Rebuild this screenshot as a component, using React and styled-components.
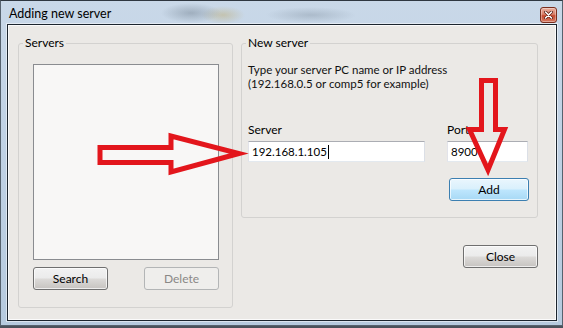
import React from 'react';
import styled, { createGlobalStyle } from 'styled-components';

const Global = createGlobalStyle`
  html, body { margin: 0; padding: 0; background: #4a525b; }
  body {
    width: 563px; height: 328px; overflow: hidden;
    font-family: Lato, "Noto Sans", sans-serif;
    font-size: 11.5px; color: #000;
  }
`;

const Window = styled.div`
  position: relative;
  width: 563px;
  height: 326px;
  box-sizing: border-box;
  border: 1px solid #56626e;
  border-top-color: #2f3740;
  background:
    radial-gradient(ellipse 30px 10px at 190px 12px, rgba(110,125,140,.45), transparent),
    radial-gradient(ellipse 22px 9px at 222px 14px, rgba(190,170,110,.45), transparent),
    radial-gradient(ellipse 45px 8px at 310px 14px, rgba(120,135,150,.35), transparent),
    linear-gradient(180deg, #c9d8e8 0%, #c0d2e5 40%, #b6cade 100%);
  display: flex;
  flex-direction: column;
`;

const TitleBar = styled.div`
  height: 23px;
  flex: none;
  display: flex;
  align-items: flex-start;
  justify-content: space-between;
  padding: 0 5px 0 8px;
`;

const Title = styled.div`
  font-size: 12.5px;
  line-height: 16px;
  margin-top: 5px;
  color: #000;
`;

const TitleClose = styled.div`
  width: 17px;
  height: 16px;
  margin-top: 6px;
  box-sizing: border-box;
  border: 1px solid #7a2e1e;
  border-radius: 3px;
  background: linear-gradient(180deg, #eab0a0 0%, #d9806a 45%, #c54a30 55%, #d67a62 100%);
  box-shadow: inset 0 0 0 1px rgba(255,255,255,.35);
  display: flex;
  align-items: center;
  justify-content: center;
`;

const Client = styled.div`
  flex: 1;
  margin: 0 5px 4px 6px;
  background: #ebe9e6;
  border: 1px solid #1c252e;
  box-shadow: inset 1px 1px 0 #fbfbfb, inset -1px -1px 0 #fbfbfb, 0 0 0 1px rgba(255,255,255,.5);
  padding: 10px 0 0 10px;
  display: flex;
  align-items: flex-start;
  gap: 8px;
`;

const Group = styled.fieldset`
  margin: 0;
  padding: 0;
  min-width: 0;
  width: ${p => p.$w}px;
  box-sizing: border-box;
  border: 1px solid #d3d2d0;
  border-radius: 3px;
`;

const Legend = styled.legend`
  margin-left: 4px;
  padding: 0 2px;
  font-size: 12px;
  line-height: 16px;
`;

const GroupBody = styled.div`
  padding: ${p => p.$pad};
`;

const ListBox = styled.div`
  width: 186px;
  height: 196px;
  box-sizing: border-box;
  border: 1px solid #8a8c90;
  background: #f8f7f6;
`;

const ButtonRow = styled.div`
  display: flex;
  justify-content: ${p => p.$justify || 'space-between'};
  margin-top: ${p => p.$top}px;
`;

const Button = styled.button`
  width: ${p => p.$w || 75}px;
  height: 23px;
  box-sizing: border-box;
  padding: 0;
  border-radius: 3px;
  font-family: inherit;
  font-size: 12px;
  color: ${p => (p.disabled ? '#8a8886' : '#000')};
  border: 1px solid ${p => (p.$primary ? '#3c7fb1' : p.disabled ? '#b3b5b6' : '#6f6f6f')};
  background: ${p =>
    p.$primary
      ? 'linear-gradient(180deg, #eaf6fd 0%, #d9f0fc 48%, #bee6fd 52%, #a7d9f5 100%)'
      : p.disabled
      ? '#efeeec'
      : 'linear-gradient(180deg, #f2f2f2 0%, #ebebeb 48%, #dcdad8 52%, #c6c3c0 100%)'};
  box-shadow: inset 0 0 0 1px ${p => (p.disabled ? 'rgba(255,255,255,0)' : 'rgba(255,255,255,.7)')};
`;

const RightColumn = styled.div`
  width: 297px;
  display: flex;
  flex-direction: column;
  align-items: flex-end;
`;

const Description = styled.div`
  margin-top: 12px;
  line-height: 14px;
  color: #111;
`;

const FieldGrid = styled.div`
  display: grid;
  grid-template-columns: 177px 82px;
  column-gap: 22px;
  margin-top: 32px;
`;

const FieldLabel = styled.div`
  font-size: 12px;
  line-height: 14px;
  margin-bottom: 4px;
`;

const TextBox = styled.div`
  height: 21px;
  width: ${p => p.$w}px;
  box-sizing: border-box;
  border: 1px solid;
  border-color: #abadb3 #dbdfe6 #e3e9ef #e2e3ea;
  background: #fff;
  padding: 0 3px;
  display: flex;
  align-items: center;
  line-height: 14px;
`;

const Caret = styled.span`
  display: inline-block;
  width: 1px;
  height: 14px;
  background: #000;
  margin-left: 1px;
`;

const CloseWrap = styled.div`
  margin-top: 27px;
`;

const Overlay = styled.svg`
  position: absolute;
  left: -1px;
  top: -1px;
  pointer-events: none;
`;

export default function App() {
  return (
    <>
      <Global />
      <Window>
        <TitleBar>
          <Title>Adding new server</Title>
          <TitleClose>
            <svg width="9" height="8" viewBox="0 0 9 8">
              <path d="M1.5 1 L7.5 7 M7.5 1 L1.5 7" stroke="#5a1a10" strokeWidth="3" strokeLinecap="round" />
              <path d="M1.5 1 L7.5 7 M7.5 1 L1.5 7" stroke="#fff" strokeWidth="1.6" strokeLinecap="round" />
            </svg>
          </TitleClose>
        </TitleBar>
        <Client>
          <Group $w={215}>
            <Legend>Servers</Legend>
            <GroupBody $pad="13px 13px 17px 14px">
              <ListBox />
              <ButtonRow $top={7}>
                <Button>Search</Button>
                <Button disabled>Delete</Button>
              </ButtonRow>
            </GroupBody>
          </Group>
          <RightColumn>
            <Group $w={297}>
              <Legend>New server</Legend>
              <GroupBody $pad="0 8px 16px 6px">
                <Description>
                  Type your server PC name or IP address
                  <br />
                  (192.168.0.5 or comp5 for example)
                </Description>
                <FieldGrid>
                  <div>
                    <FieldLabel>Server</FieldLabel>
                    <TextBox $w={177}>
                      192.168.1.105
                      <Caret />
                    </TextBox>
                  </div>
                  <div>
                    <FieldLabel>Port</FieldLabel>
                    <TextBox $w={81}>8900</TextBox>
                  </div>
                </FieldGrid>
                <ButtonRow $top={16} $justify="flex-end">
                  <Button $primary $w={80}>Add</Button>
                </ButtonRow>
              </GroupBody>
            </Group>
            <CloseWrap>
              <Button>Close</Button>
            </CloseWrap>
          </RightColumn>
        </Client>
        <Overlay width="563" height="328" viewBox="0 0 563 328">
          <g fill="none" stroke="#e3161c" strokeWidth="5" strokeLinejoin="miter" strokeMiterlimit="10">
            <path d="M100 147.5 L171 147.5 L171 136 L239 153.5 L171 172 L171 162.5 L100 162.5 Z" />
            <path d="M481.5 80.5 L495.5 80.5 L495.5 129.5 L504.5 129.5 L488 170 L469.5 129.5 L481.5 129.5 Z" />
          </g>
        </Overlay>
      </Window>
    </>
  );
}
